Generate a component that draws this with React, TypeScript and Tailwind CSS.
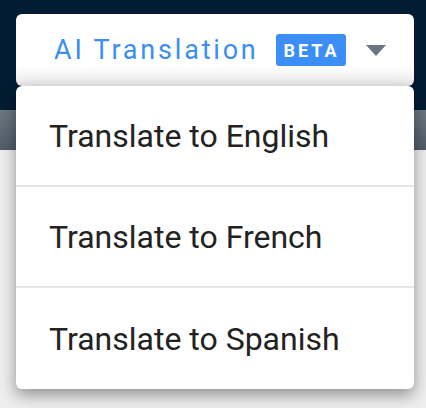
import React from "react";

export default function App() {
  const items = ["Translate to English", "Translate to French", "Translate to Spanish"];
  return (
    <div
      className="relative w-[426px] h-[408px] overflow-hidden bg-[#eeeeee]"
      style={{ fontFamily: "Roboto, 'Noto Sans', sans-serif" }}
    >
      <div className="h-[110px] bg-[#031c33]" />
      <div className="h-[40px] bg-gradient-to-b from-[#6d7883] to-[#4f5c68]" />

      <div className="absolute left-[16px] top-[14px] w-[398px]">
        <div className="h-[72px] rounded-[6px] bg-[linear-gradient(to_bottom,#ffffff_72%,#e9e9e9_100%)] flex items-center pl-[38px] pr-[28px]">
          <span className="text-[27px] leading-none tracking-[2.8px] text-[#3b8ef3]">AI Translation</span>
          <span className="ml-[17px] h-[32px] w-[70px] rounded-[3px] bg-[#3a8ef6] text-white text-[18px] font-bold tracking-[3px] flex items-center justify-center pl-[2px]">
            BETA
          </span>
          <svg className="ml-auto" width="20" height="11" viewBox="0 0 20 11">
            <path d="M0 0 L20 0 L10 11 Z" fill="#6c7680" />
          </svg>
        </div>
        <div className="rounded-[6px] bg-white shadow-[0_6px_16px_rgba(0,0,0,0.4)] flex flex-col">
          {items.map((t, i) => (
            <div
              key={t}
              className={
                "h-[101px] flex items-center pl-[33px] text-[32px] text-[#222222] " +
                (i < items.length - 1 ? "border-b-2 border-[#e6e6e6]" : "")
              }
            >
              {t}
            </div>
          ))}
        </div>
      </div>
    </div>
  );
}
